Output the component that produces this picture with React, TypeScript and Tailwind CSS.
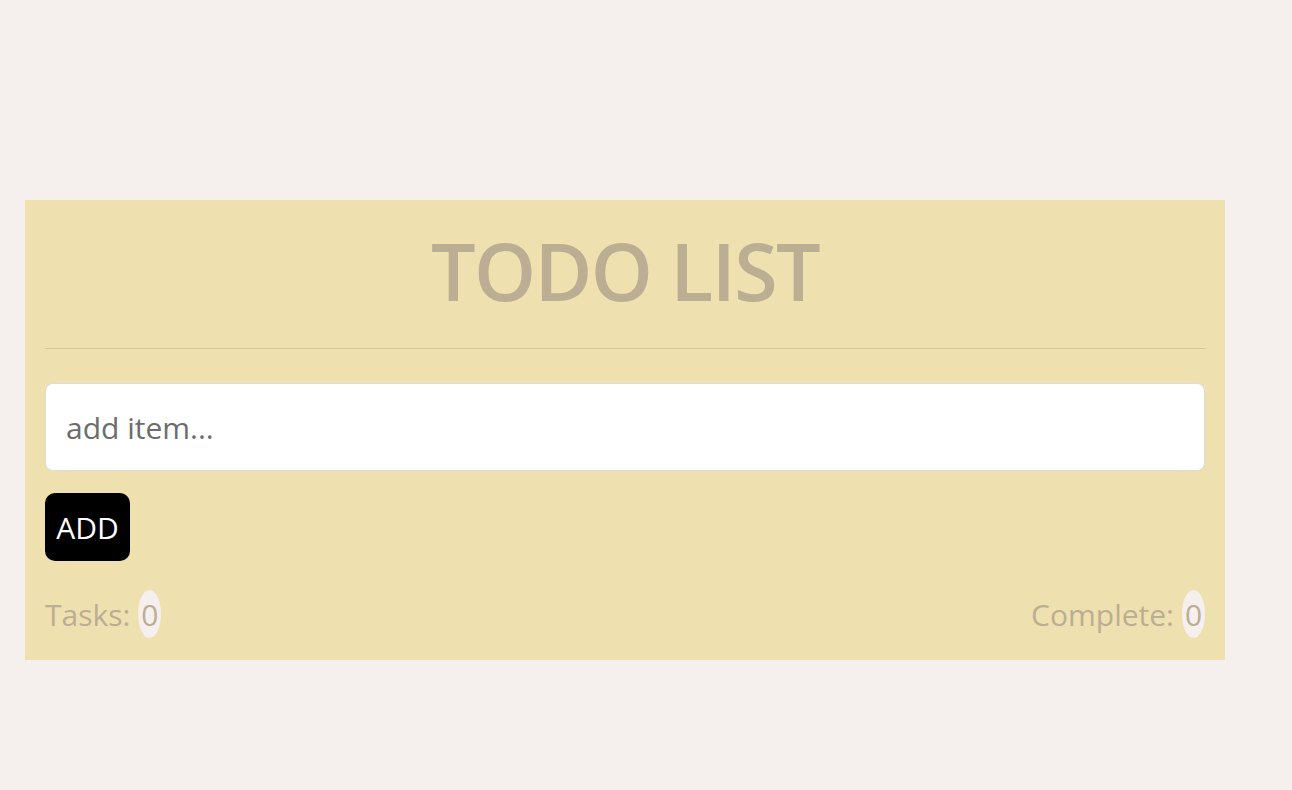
import React from "react";

export default function App() {
  const font = { fontFamily: '"Open Sans", "Noto Sans", sans-serif' };
  return (
    <div className="min-h-[790px] w-full bg-[#f5efee] pt-[200px] pl-[25px]" style={font}>
      <div className="w-[1200px] bg-[#efe0b0] px-[20px] pt-[31px] pb-[22px]">
        <h1 className="text-center text-[79px] leading-[80px] font-semibold text-[#bcae92] tracking-[-1.6px]">TODO LIST</h1>
        <div className="mt-[37px] h-px bg-[#d6c89d]" />
        <input
          className="mt-[34px] block h-[88px] w-full rounded-[8px] border border-[#dcdcdc] bg-white px-[20px] text-[30px] text-[#444] placeholder:text-[#6d6d6d] outline-none"
          placeholder="add item..."
        />
        <button className="mt-[22px] flex h-[68px] w-[85px] items-center justify-center rounded-[10px] bg-black text-[30px] text-white">
          ADD
        </button>
        <div className="mt-[29px] flex items-center justify-between text-[30px] text-[#bcae92]">
          <div className="flex items-center">
            <span>Tasks:</span>
            <span className="ml-[8px] flex h-[48px] w-[23px] items-center justify-center rounded-[50%] bg-[#f5efee]">0</span>
          </div>
          <div className="flex items-center">
            <span>Complete:</span>
            <span className="ml-[8px] flex h-[48px] w-[23px] items-center justify-center rounded-[50%] bg-[#f5efee]">0</span>
          </div>
        </div>
      </div>
    </div>
  );
}
